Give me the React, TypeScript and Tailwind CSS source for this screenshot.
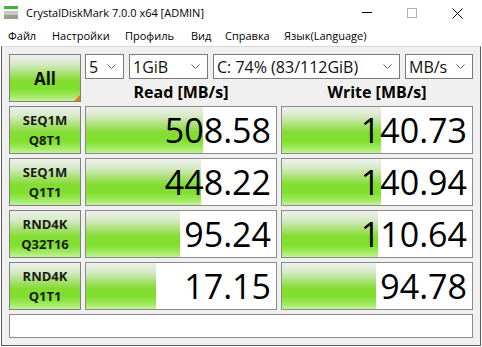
import React from 'react';

const greenBg =
  'bg-[linear-gradient(to_bottom,#eef1ec_0%,#d6eac6_20%,#a8e070_40%,#84dc34_55%,#80e02e_74%,#a2ea62_90%,#c4f29c_100%)]';

interface Row {
  l1: string;
  l2: string;
  read: string;
  readBar: number;
  write: string;
  writeBar: number;
}

const rows: Row[] = [
  { l1: 'SEQ1M', l2: 'Q8T1', read: '508.58', readBar: 117, write: '140.73', writeBar: 99 },
  { l1: 'SEQ1M', l2: 'Q1T1', read: '448.22', readBar: 115, write: '140.94', writeBar: 99 },
  { l1: 'RND4K', l2: 'Q32T16', read: '95.24', readBar: 94, write: '110.64', writeBar: 96 },
  { l1: 'RND4K', l2: 'Q1T1', read: '17.15', readBar: 70, write: '94.78', writeBar: 94 },
];

const menuItems = [
  { label: 'Файл', w: 'w-[44px]' },
  { label: 'Настройки', w: 'w-[73px]' },
  { label: 'Профиль', w: 'w-[66px]' },
  { label: 'Вид', w: 'w-[34px]' },
  { label: 'Справка', w: 'w-[59px]' },
  { label: 'Язык(Language)', w: 'w-[110px]' },
];

const Chevron = () => (
  <svg width="9" height="5" viewBox="0 0 9 5" className="shrink-0">
    <polyline points="0.5,0.5 4.5,4.5 8.5,0.5" fill="none" stroke="#606060" strokeWidth="1" />
  </svg>
);

const Select: React.FC<{ value: string; w: string }> = ({ value, w }) => (
  <div className={`${w} h-[25px] bg-white border border-[#7a7a7a] flex items-center justify-between pl-[3px] pr-[7px]`}>
    <span className="text-[16px] leading-none text-[#111]">{value}</span>
    <Chevron />
  </div>
);

const ValueBox: React.FC<{ value: string; bar: number }> = ({ value, bar }) => (
  <div className="relative w-[192px] h-[48px] bg-white border border-[#8a8a8a]">
    <div className={`absolute left-0 top-0 bottom-0 ${greenBg}`} style={{ width: bar }} />
    <div className="relative h-full flex items-center justify-end pr-[5px] text-[34px] leading-none text-black">
      {value}
    </div>
  </div>
);

const App: React.FC = () => {
  return (
    <div className="w-[482px] h-[347px] bg-white overflow-hidden font-['Open_Sans','Noto_Sans',sans-serif] text-black">
      {/* title bar */}
      <div className="h-[25px] flex items-center relative">
        <svg width="14" height="14" viewBox="0 0 14 14" className="ml-[4px]">
          <rect x="0" y="0" width="14" height="3" fill="#3cb43c" />
          <rect x="0" y="5" width="14" height="8" fill="#9a9a9a" />
          <rect x="0" y="5" width="14" height="4" fill="#c8c8c8" />
          <rect x="1" y="9" width="3" height="2" fill="#5cdc3c" />
        </svg>
        <span className="ml-[8px] text-[11px] leading-none">CrystalDiskMark 7.0.0 x64 [ADMIN]</span>
        <div className="absolute left-[362px] top-[12px] w-[10px] h-px bg-black" />
        <div className="absolute left-[407px] top-[8px] w-[10px] h-[10px] border border-[#b0b0b0]" />
        <svg width="11" height="11" viewBox="0 0 11 11" className="absolute left-[452px] top-[8px]">
          <line x1="0.5" y1="0.5" x2="10.5" y2="10.5" stroke="#000" strokeWidth="1" />
          <line x1="10.5" y1="0.5" x2="0.5" y2="10.5" stroke="#000" strokeWidth="1" />
        </svg>
      </div>

      {/* menu bar */}
      <div className="h-[21px] flex items-center pl-[8px] text-[11px] leading-none">
        {menuItems.map((m) => (
          <div key={m.label} className={`${m.w} shrink-0 whitespace-nowrap`}>
            {m.label}
          </div>
        ))}
      </div>

      {/* main panel */}
      <div className="ml-[1px] w-[480px] h-[300px] border border-[#5e5e5e] border-t-[#d8d8d8] bg-[#f0f0f0] px-[7px] pt-[7px]">
        <div className="flex gap-[4px]">
          <div className={`relative w-[72px] h-[48px] border border-[#808080] ${greenBg} flex items-center justify-center`}>
            <span className="text-[17px] font-bold leading-none text-[#111]">All</span>
            <div className="absolute right-0 bottom-0 w-0 h-0 border-l-[6px] border-l-transparent border-b-[6px] border-b-[#f07818]" />
          </div>
          <div className="flex flex-col">
            <div className="flex gap-[5px]">
              <Select value="5" w="w-[39px]" />
              <Select value="1GiB" w="w-[79px]" />
              <Select value="C: 74% (83/112GiB)" w="w-[187px]" />
              <Select value="MB/s" w="w-[68px]" />
            </div>
            <div className="flex gap-[4px] h-[23px] items-center">
              <div className="w-[192px] text-center text-[16px] font-bold leading-none pt-[2px]">Read [MB/s]</div>
              <div className="w-[192px] text-center text-[16px] font-bold leading-none pt-[2px]">Write [MB/s]</div>
            </div>
          </div>
        </div>

        {rows.map((r, i) => (
          <div key={i} className="flex gap-[4px] mt-[4px]">
            <div className={`w-[72px] h-[48px] border border-[#808080] ${greenBg} flex flex-col items-center justify-center text-[13px] font-bold leading-[20px] text-[#1a1a1a]`}>
              <span>{r.l1}</span>
              <span>{r.l2}</span>
            </div>
            <ValueBox value={r.read} bar={r.readBar} />
            <ValueBox value={r.write} bar={r.writeBar} />
          </div>
        ))}

        <div className="mt-[4px] w-[464px] h-[24px] bg-white border border-[#8a8a8a]" />
      </div>
    </div>
  );
};

export default App;
